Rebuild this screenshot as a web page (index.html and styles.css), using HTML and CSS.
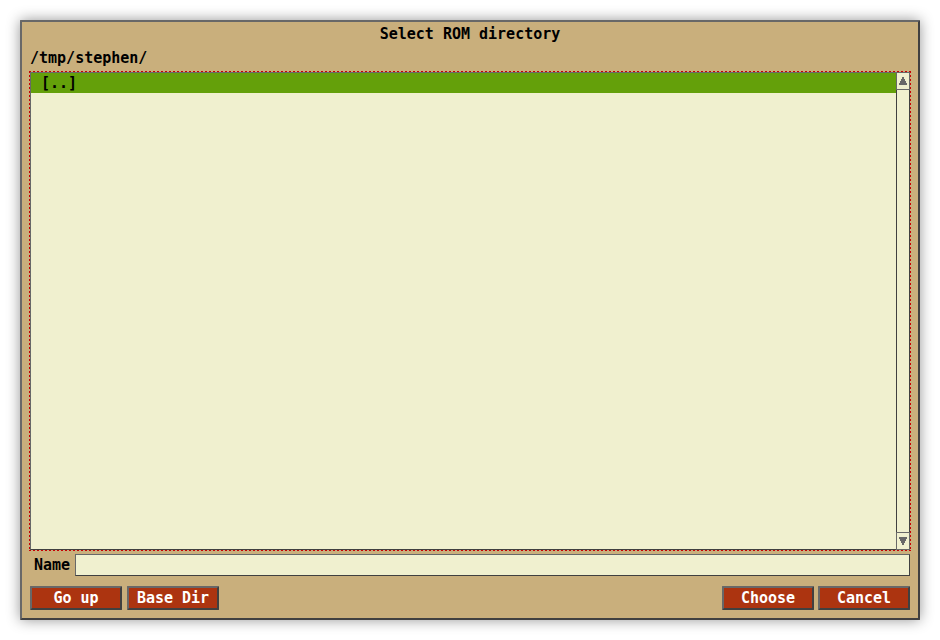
FILE: index.html
```html
<!DOCTYPE html>
<html lang="en">
<head>
<meta charset="utf-8">
<meta name="viewport" content="width=device-width, initial-scale=1">
<title>Select ROM directory</title>
<link rel="stylesheet" href="styles.css">
</head>
<body>
<form class="dialog">
  <h1 class="title">Select ROM directory</h1>
  <p class="path">/tmp/stephen/</p>
  <div class="focus-ring">
    <div class="browser">
      <ul class="files" role="listbox" aria-label="Directories">
        <li class="file selected" role="option" aria-selected="true">[..]</li>
      </ul>
      <div class="scrollbar">
        <button class="arrow" type="button" aria-label="Scroll up">
          <svg width="8" height="8" viewBox="0 0 8 8" shape-rendering="crispEdges"><path d="M3 0h2v2h1v2h1v2h1v2H0V6h1V4h1V2h1z"/></svg>
        </button>
        <div class="track"></div>
        <button class="arrow down" type="button" aria-label="Scroll down">
          <svg width="8" height="8" viewBox="0 0 8 8" shape-rendering="crispEdges"><path d="M0 0h8v2H7v2H6v2H5v2H3V6H2V4H1V2H0z"/></svg>
        </button>
      </div>
    </div>
  </div>
  <div class="name-row">
    <label for="name">Name</label>
    <input id="name" type="text">
  </div>
  <div class="actions">
    <div class="group">
      <button class="button" type="button">Go up</button>
      <button class="button" type="button">Base Dir</button>
    </div>
    <div class="group confirm">
      <button class="button" type="button">Choose</button>
      <button class="button" type="button">Cancel</button>
    </div>
  </div>
</form>
</body>
</html>
```
FILE: styles.css
```css
:root {
  --tan: #c9af7c;
  --cream: #f0f0cf;
  --light-edge: #686868;
  --dark-edge: #404040;
  --focus: #c80003;
}

* {
  box-sizing: border-box;
}

body {
  display: flex;
  min-height: 100vh;
  margin: 0;
  padding: 20px;
  background: #fff;
  color: #000;
  font: bold 15px/24px "DejaVu Sans Mono", monospace;
}

.dialog {
  display: flex;
  flex: 1;
  flex-direction: column;
  min-width: 0;
  padding: 0 7px 8px;
  border: 2px solid;
  border-color: var(--light-edge) var(--dark-edge) var(--dark-edge) var(--light-edge);
  border-radius: 1px;
  background: var(--tan);
  box-shadow: 0 0 14px rgba(0, 0, 0, 0.42);
}

.title,
.path {
  margin: 0;
  font: inherit;
}

.title {
  text-align: center;
}

.path {
  padding: 0 1px 1px;
}

/* Dashed one-pixel outline round the list */
.focus-ring {
  display: flex;
  flex: 1;
  padding: 1px;
  background:
    repeating-linear-gradient(90deg, var(--focus) 0 2px, transparent 2px 4px) top / 100% 1px no-repeat,
    repeating-linear-gradient(90deg, var(--focus) 0 2px, transparent 2px 4px) bottom / 100% 1px no-repeat,
    repeating-linear-gradient(var(--focus) 0 2px, transparent 2px 4px) left / 1px 100% no-repeat,
    repeating-linear-gradient(var(--focus) 0 2px, transparent 2px 4px) right / 1px 100% no-repeat;
}

.browser {
  display: flex;
  flex: 1;
  background: var(--cream);
}

.files {
  flex: 1;
  margin: 0;
  padding: 0;
  border: 1px solid;
  border-color: var(--light-edge) transparent var(--dark-edge) var(--light-edge);
  border-right: 0;
  list-style: none;
}

.file {
  padding: 0 10px;
  line-height: 20px;
}

.selected {
  background: #64a00a;
}

.scrollbar {
  display: flex;
  flex-direction: column;
  width: 14px;
}

.arrow {
  display: flex;
  align-items: center;
  justify-content: center;
  height: 18px;
  padding: 0;
  border: 1px solid var(--light-edge);
  background: var(--cream);
  fill: var(--light-edge);
}

.track {
  flex: 1;
  border: solid var(--dark-edge);
  border-width: 0 1px;
}

.name-row {
  display: flex;
  align-items: center;
  gap: 5px;
  margin-top: 3px;
  padding: 0 1px 0 5px;
}

.name-row input {
  flex: 1;
  min-width: 0;
  height: 22px;
  padding: 0 4px;
  border: 1px solid;
  border-color: var(--light-edge) var(--dark-edge) var(--dark-edge) var(--light-edge);
  border-radius: 0;
  background: var(--cream);
  font: inherit;
}

.name-row label {
  line-height: 22px;
}

.actions {
  display: flex;
  justify-content: space-between;
  margin-top: 10px;
  padding: 0 1px;
}

.group {
  display: flex;
  gap: 5px;
}

.confirm {
  gap: 4px;
}

.button {
  width: 92px;
  height: 24px;
  padding: 0;
  border: 2px solid;
  border-color: var(--light-edge) var(--dark-edge) var(--dark-edge) var(--light-edge);
  border-radius: 1px;
  background: #ac3410;
  color: #fff;
  font: inherit;
  line-height: 20px;
}
```
